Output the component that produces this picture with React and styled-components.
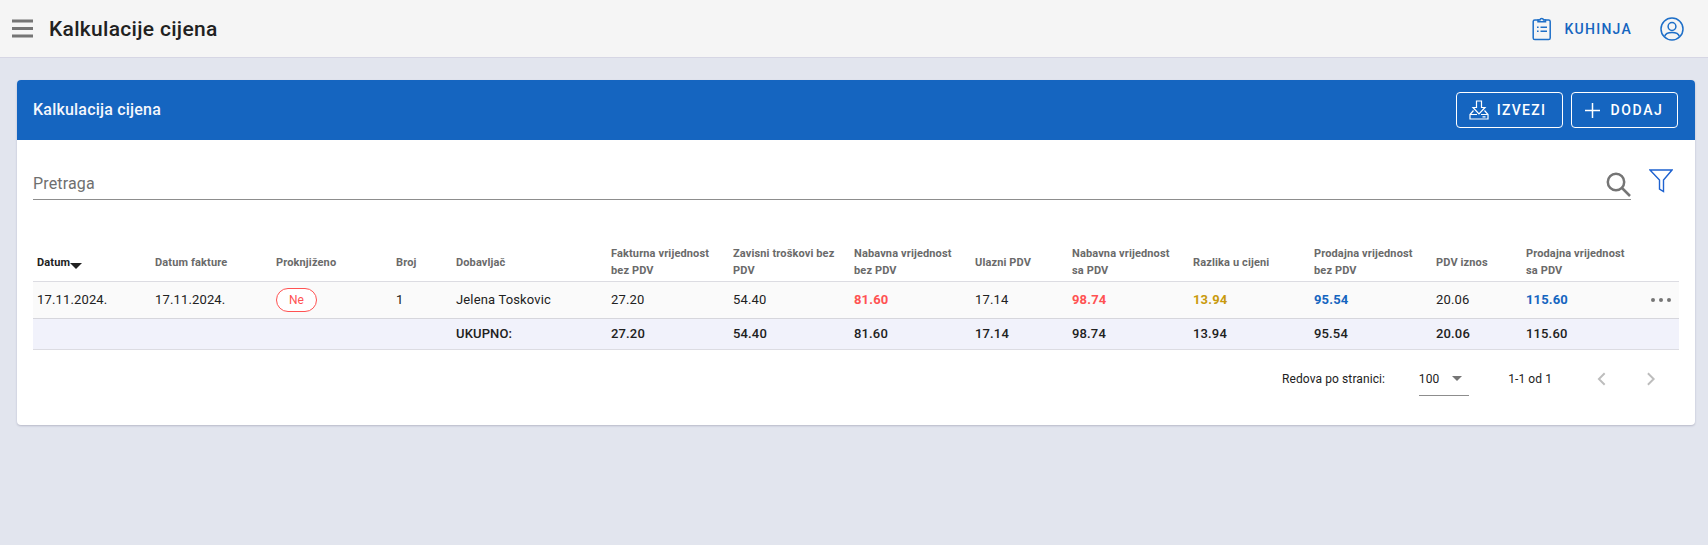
import React from "react";
import styled, { createGlobalStyle } from "styled-components";

const Global = createGlobalStyle`
  html, body { margin: 0; padding: 0; background: #e2e5ee; }
  body { font-family: Roboto, "Liberation Sans", sans-serif; color: #212121; overflow: hidden; }
`;

const Page = styled.div`min-height: 100vh; display: flex; flex-direction: column;`;
const TopBar = styled.header`
  height: 58px; box-sizing: border-box; background: #f5f5f5; border-bottom: 1px solid #d6d6e4;
  display: flex; align-items: center; padding: 0 24px 0 12px;
`;
const Burger = styled.svg`width: 22px; height: 20px; display: block; margin-right: 15px;`;
const Title = styled.h1`margin: 0; font-size: 21px; font-weight: 500; color: #212121; flex: 1; letter-spacing: 0.3px;`;
const KitchenButton = styled.div`
  display: flex; align-items: center; gap: 13px; color: #1565c0; font-size: 14px; font-weight: 500;
  letter-spacing: 1.25px; margin-right: 28px;
`;
const Main = styled.main`padding: 22px 13px 0 17px;`;
const Card = styled.section`
  background: #fff; border-radius: 4px; box-shadow: 0 1px 2px rgba(60,60,90,.25); height: 345px; overflow: hidden;
`;
const CardHead = styled.div`
  height: 60px; box-sizing: border-box; background: #1565c0; display: flex; align-items: center;
  padding: 0 17px 0 16px; gap: 8px;
`;
const CardTitle = styled.h2`margin: 0 0 2px; flex: 1; color: #f5f7fc; font-size: 16px; font-weight: 500; letter-spacing: .2px;`;
const HeadButton = styled.button`
  width: 107px; height: 36px; box-sizing: border-box; border: 1px solid #fff; border-radius: 4px; background: transparent;
  color: #fff; font: 500 14px Roboto, sans-serif; letter-spacing: ${p => p.$spacing}; display: flex; align-items: center; justify-content: center;
  gap: ${p => p.$gap}; padding: 0 ${p => p.$padRight} 0 0;
`;
const SearchRow = styled.div`display: flex; align-items: flex-start; padding: 29px 22px 0 16px; gap: 18px;`;
const SearchField = styled.div`
  flex: 1; height: 30px; border-bottom: 1px solid #8d8d8d; display: flex; align-items: center; justify-content: space-between;
  color: #6f6f6f; font-size: 16px; letter-spacing: .15px;
`;
const SearchText = styled.span`margin-bottom: 2px;`;
const TableWrap = styled.div`padding: 44px 16px 0 16px;`;
const Table = styled.table`width: 100%; table-layout: fixed; border-collapse: collapse;`;
const Th = styled.th`
  height: 37px; padding: 0 4px; box-sizing: border-box; text-align: left; vertical-align: middle;
  font-size: 11px; line-height: 17px; font-weight: 700; letter-spacing: .13px;
  color: ${p => (p.$active ? "#212121" : "#6a6a6a")};
  border-bottom: 1px solid #dcdce2;
`;
const HeadLabel = styled.span`display: block; max-width: 104px;`;
const BodyRow = styled.tr`background: #fafafa;`;
const TotalRow = styled.tr`background: #f1f2fb;`;
const Td = styled.td`
  height: 36px; padding: 0 4px; font-size: 13px; letter-spacing: .15px; color: ${p => p.$color || "#212121"};
  font-weight: ${p => (p.$color ? 700 : 400)}; border-bottom: 1px solid #d6d6dc;
`;
const TotalTd = styled.td`
  height: 30px; padding: 0 4px; font-size: 13px; font-weight: 500; letter-spacing: .15px; color: #212121;
  border-bottom: 1px solid #dcdce2;
`;
const Pill = styled.span`
  display: inline-flex; width: 41px; height: 24px; box-sizing: border-box; align-items: center; justify-content: center;
  border: 1px solid #ff5252; border-radius: 12px; color: #ff5252; font-size: 12px; background: #fff; vertical-align: middle;
`;
const Caret = styled.span`
  display: inline-block; width: 0; height: 0; border: 6px solid transparent; border-top: 6px solid #212121; border-bottom: 0;
  vertical-align: -3px; margin-left: 0;
`;
const Dots = styled.div`display: flex; justify-content: flex-end; gap: 4px; padding-right: 4px;`;
const Dot = styled.i`width: 4px; height: 4px; border-radius: 50%; background: #757575; display: block;`;
const Pager = styled.div`
  display: flex; align-items: center; height: 52px; margin-top: 3px; padding-left: 1265px; font-size: 12px; color: #212121; letter-spacing: .1px;
`;
const PagerLabel = styled.span`width: 142px;`;
const PerPage = styled.div`
  width: 52px; height: 34px; margin-top: 1px; box-sizing: border-box; border-bottom: 1px solid #8d8d8d; display: flex; align-items: center; justify-content: space-between;
  padding-right: 7px;
`;
const Arrow = styled.span`width: 0; height: 0; border: 5px solid transparent; border-top: 5px solid #757575; border-bottom: 0;`;
const Range = styled.span`width: 91px; margin-left: 39px;`;
const Chevron = styled.svg`width: 12px; height: 16px; margin-right: 38px; display: block;`;

const cols = [118, 121, 120, 60, 155, 122, 121, 121, 97, 121, 121, 122, 90, 115, 42];
const heads = ["Datum fakture", "Proknjiženo", "Broj", "Dobavljač", "Fakturna vrijednost bez PDV", "Zavisni troškovi bez PDV", "Nabavna vrijednost bez PDV", "Ulazni PDV", "Nabavna vrijednost sa PDV", "Razlika u cijeni", "Prodajna vrijednost bez PDV", "PDV iznos", "Prodajna vrijednost sa PDV", ""];
const RED = "#ff5252", GOLD = "#c99a0d", BLUE = "#1565c0";

const ClipboardIcon = () => (
  <svg width="20" height="25" viewBox="0 0 20 25" fill="none" stroke="#1e6fc8" strokeWidth="1.5">
    <rect x="1.2" y="4" width="17" height="19.6" rx="1.6" />
    <path d="M6 4V5.8H13.5V4H11.6A1.9 1.9 0 0 0 7.9 4Z" fill="#f5f5f5" />
    <path d="M5 11.3H6.6M5 15.2H6.6M8.5 11.3H15M8.5 15.2H15" />
  </svg>
);
const UserIcon = () => (
  <svg width="24" height="24" viewBox="0 0 24 24" fill="none" stroke="#1e6fc8" strokeWidth="1.5">
    <circle cx="12" cy="12" r="11" />
    <circle cx="12" cy="9.5" r="3.9" />
    <path d="M4.6 19.5C5.5 16.6 8.5 15.6 12 15.6S18.5 16.6 19.4 19.5" />
  </svg>
);
const ExportIcon = () => (
  <svg width="20" height="20" viewBox="0 0 20 20" fill="none" stroke="#fff" strokeWidth="1.2">
    <path d="M7.5 1H12.5V7.5H16L10 13.8L4 7.5H7.5Z" />
    <path d="M4.5 10.5L1 14.5V19H19V14.5L15.5 10.5M1 14.5H8M12 14.5H19M13.5 16.8H16.5" />
  </svg>
);
const PlusIcon = () => (
  <svg width="15" height="15" viewBox="0 0 15 15" stroke="#fff" strokeWidth="1.5"><path d="M7.5 0V15M0 7.5H15" /></svg>
);

export default function App() {
  return (
    <Page>
      <Global />
      <TopBar>
        <Burger viewBox="0 0 22 20" fill="#757575"><rect y="0.5" width="21" height="3" /><rect y="8" width="21" height="3" /><rect y="15.5" width="21" height="3" /></Burger>
        <Title>Kalkulacije cijena</Title>
        <KitchenButton><ClipboardIcon />KUHINJA</KitchenButton>
        <UserIcon />
      </TopBar>
      <Main>
        <Card>
          <CardHead>
            <CardTitle>Kalkulacija cijena</CardTitle>
            <HeadButton $spacing="1.3px" $gap="8px" $padRight="4px"><ExportIcon />IZVEZI</HeadButton>
            <HeadButton $spacing="1.65px" $gap="10px" $padRight="0"><PlusIcon />DODAJ</HeadButton>
          </CardHead>
          <SearchRow>
            <SearchField>
              <SearchText>Pretraga</SearchText>
              <svg width="25" height="25" viewBox="0 0 25 25" fill="none" stroke="#757575" strokeWidth="2.5"><circle cx="10" cy="10" r="8.2" /><path d="M16 16L24 24" /></svg>
            </SearchField>
            <svg width="24" height="24" viewBox="0 0 24 24" fill="none" stroke="#1e62d0" strokeWidth="1.4"><path d="M1 1H23L14.5 11V22.5L10.5 20V11Z" /></svg>
          </SearchRow>
          <TableWrap>
            <Table>
              <colgroup>{cols.map((w, i) => <col key={i} width={w} />)}</colgroup>
              <thead>
                <tr>
                  <Th $active>Datum<Caret /></Th>
                  {heads.map((h, i) => <Th key={i}><HeadLabel>{h}</HeadLabel></Th>)}
                </tr>
              </thead>
              <tbody>
                <BodyRow>
                  <Td>17.11.2024.</Td><Td>17.11.2024.</Td><Td><Pill>Ne</Pill></Td><Td>1</Td><Td>Jelena Toskovic</Td>
                  <Td>27.20</Td><Td>54.40</Td><Td $color={RED}>81.60</Td><Td>17.14</Td><Td $color={RED}>98.74</Td>
                  <Td $color={GOLD}>13.94</Td><Td $color={BLUE}>95.54</Td><Td>20.06</Td><Td $color={BLUE}>115.60</Td>
                  <Td><Dots><Dot /><Dot /><Dot /></Dots></Td>
                </BodyRow>
                <TotalRow>
                  <TotalTd /><TotalTd /><TotalTd /><TotalTd /><TotalTd>UKUPNO:</TotalTd>
                  {["27.20","54.40","81.60","17.14","98.74","13.94","95.54","20.06","115.60",""].map((v, i) => <TotalTd key={i}>{v}</TotalTd>)}
                </TotalRow>
              </tbody>
            </Table>
          </TableWrap>
          <Pager>
            <PagerLabel>Redova po stranici:</PagerLabel>
            <PerPage>100<Arrow /></PerPage>
            <Range>1-1 od 1</Range>
            <Chevron viewBox="0 0 12 16" fill="none" stroke="#bdbdbd" strokeWidth="2"><path d="M9 2L3 8L9 14" /></Chevron>
            <Chevron viewBox="0 0 12 16" fill="none" stroke="#bdbdbd" strokeWidth="2"><path d="M3 2L9 8L3 14" /></Chevron>
          </Pager>
        </Card>
      </Main>
    </Page>
  );
}
